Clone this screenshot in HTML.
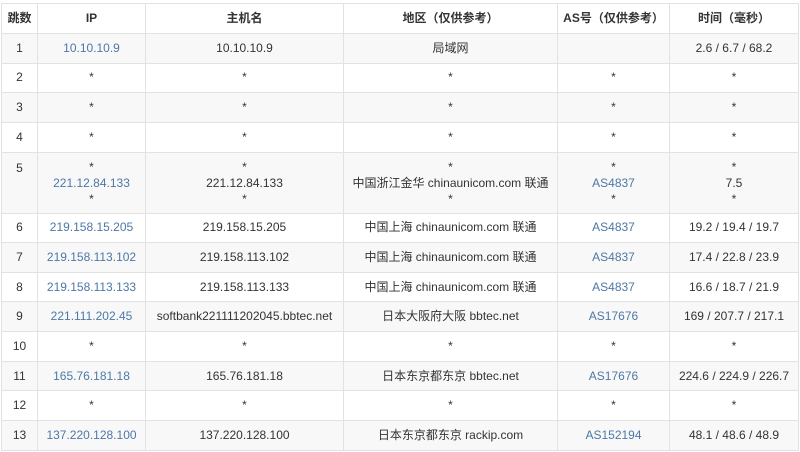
<!DOCTYPE html>
<html><head><meta charset="utf-8"><style>
html,body{margin:0;padding:0;background:#fff;width:800px;height:452px;overflow:hidden}
table{position:absolute;left:1px;top:3px;border-collapse:collapse;table-layout:fixed;width:797px;font-family:"Liberation Sans","Noto Sans CJK SC",sans-serif;font-size:12px;color:#333}
td,th{border:1px solid #e2e2e2;text-align:center;padding:0;height:28.65px;line-height:15px;white-space:nowrap;overflow:hidden}
th{font-weight:bold;height:29px}
tr:nth-child(even) td{background:#f8f8f8}
a{color:#4c78a8;text-decoration:none}
.t td{height:60px}
.t div{height:16px;line-height:16px;overflow:hidden}
</style></head><body>
<table>
<colgroup><col style="width:36px"><col style="width:108px"><col style="width:198px"><col style="width:214px"><col style="width:112px"><col style="width:129px"></colgroup>
<tr><th>跳数</th><th>IP</th><th>主机名</th><th>地区（仅供参考）</th><th>AS号（仅供参考）</th><th>时间（毫秒）</th></tr>
<tr><td>1</td><td><a>10.10.10.9</a></td><td>10.10.10.9</td><td>局域网</td><td></td><td>2.6 / 6.7 / 68.2</td></tr>
<tr><td>2</td><td>*</td><td>*</td><td>*</td><td>*</td><td>*</td></tr>
<tr><td>3</td><td>*</td><td>*</td><td>*</td><td>*</td><td>*</td></tr>
<tr><td>4</td><td>*</td><td>*</td><td>*</td><td>*</td><td>*</td></tr>
<tr class="t"><td style="vertical-align:top"><div style="margin-top:7px">5</div></td><td><div>*</div><div><a>221.12.84.133</a></div><div>*</div></td><td><div>*</div><div>221.12.84.133</div><div>*</div></td><td><div>*</div><div>中国浙江金华 chinaunicom.com 联通</div><div>*</div></td><td><div>*</div><div><a>AS4837</a></div><div>*</div></td><td><div>*</div><div>7.5</div><div>*</div></td></tr>
<tr><td>6</td><td><a>219.158.15.205</a></td><td>219.158.15.205</td><td>中国上海 chinaunicom.com 联通</td><td><a>AS4837</a></td><td>19.2 / 19.4 / 19.7</td></tr>
<tr><td>7</td><td><a>219.158.113.102</a></td><td>219.158.113.102</td><td>中国上海 chinaunicom.com 联通</td><td><a>AS4837</a></td><td>17.4 / 22.8 / 23.9</td></tr>
<tr><td>8</td><td><a>219.158.113.133</a></td><td>219.158.113.133</td><td>中国上海 chinaunicom.com 联通</td><td><a>AS4837</a></td><td>16.6 / 18.7 / 21.9</td></tr>
<tr><td>9</td><td><a>221.111.202.45</a></td><td>softbank221111202045.bbtec.net</td><td>日本大阪府大阪 bbtec.net</td><td><a>AS17676</a></td><td>169 / 207.7 / 217.1</td></tr>
<tr><td>10</td><td>*</td><td>*</td><td>*</td><td>*</td><td>*</td></tr>
<tr><td>11</td><td><a>165.76.181.18</a></td><td>165.76.181.18</td><td>日本东京都东京 bbtec.net</td><td><a>AS17676</a></td><td>224.6 / 224.9 / 226.7</td></tr>
<tr><td>12</td><td>*</td><td>*</td><td>*</td><td>*</td><td>*</td></tr>
<tr><td>13</td><td><a>137.220.128.100</a></td><td>137.220.128.100</td><td>日本东京都东京 rackip.com</td><td><a>AS152194</a></td><td>48.1 / 48.6 / 48.9</td></tr>
</table>
</body></html>
